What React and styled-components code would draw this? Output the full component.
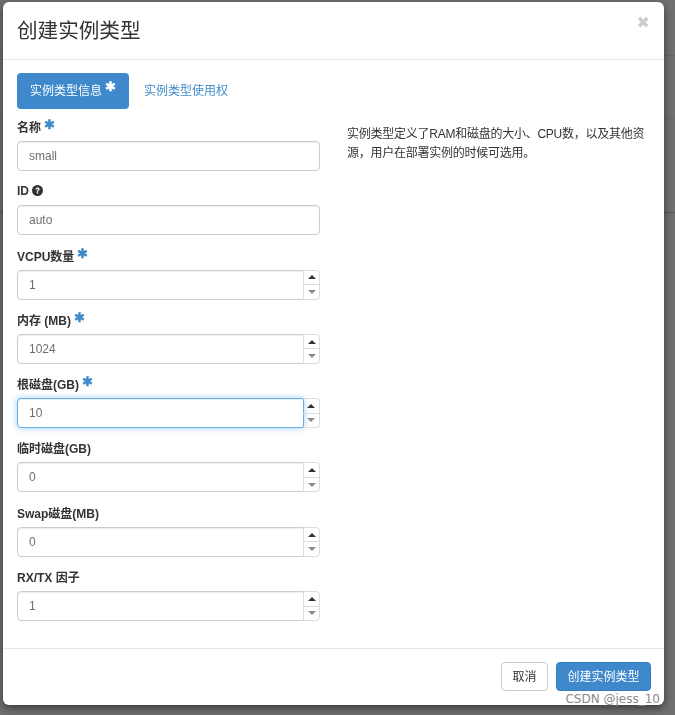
import React from "react";
import styled, { createGlobalStyle } from "styled-components";

const GlobalStyle = createGlobalStyle`
  html, body {
    margin: 0;
    padding: 0;
    height: 715px;
    overflow: hidden;
    background: #6e6e6e;
    font-family: "Liberation Sans", "Noto Sans CJK SC", sans-serif;
    color: #333;
  }
  * { box-sizing: border-box; }
`;

const Backdrop = styled.div`
  position: relative;
  width: 675px;
  height: 715px;
  padding: 2px 0 0 3px;
  background:
    linear-gradient(#565656, #565656) 0 212px / 100% 1px no-repeat,
    linear-gradient(#686868, #686868) 0 118px / 100% 1px no-repeat,
    linear-gradient(#686868, #686868) 0 55px / 100% 1px no-repeat,
    #707070;
`;

const Modal = styled.div`
  width: 661px;
  height: 703px;
  display: flex;
  flex-direction: column;
  background: #fff;
  border-radius: 6px;
  box-shadow: 0 3px 9px rgba(0, 0, 0, 0.5);
  filter: blur(0.3px);
`;

const Header = styled.div`
  height: 58px;
  flex: none;
  display: flex;
  align-items: flex-start;
  justify-content: space-between;
  padding: 14px 14px 0 14px;
  border-bottom: 1px solid #e5e5e5;
`;

const Title = styled.h4`
  margin: 0;
  font-size: 20.6px;
  font-weight: 400;
  line-height: 29px;
  color: #333;
`;

const Close = styled.span`
  font-family: "DejaVu Sans", sans-serif;
  font-size: 16px;
  line-height: 14px;
  color: #ccc;
`;

const Body = styled.div`
  flex: 1;
  padding: 13px 14px 0 14px;
`;

const Tabs = styled.div`
  display: flex;
  align-items: stretch;
  height: 36px;
`;

const Tab = styled.div`
  display: flex;
  align-items: center;
  height: 36px;
  padding: 0 13px 4px;
  border-radius: 4px;
  font-size: 12px;
  color: ${(p) => (p.$active ? "#fff" : "#428bca")};
  background: ${(p) => (p.$active ? "#3f88cb" : "transparent")};
  margin-left: ${(p) => (p.$active ? "0" : "2px")};
`;

const TabStar = styled.span`
  font-size: 13px;
  font-weight: 700;
  margin: -5px 0 0 3px;
`;

const Columns = styled.div`
  display: flex;
  gap: 27px;
`;

const FormColumn = styled.div`
  width: 303px;
  flex: none;
  padding-top: 10px;
`;

const Field = styled.div`
  height: 64.3px;
`;

const Label = styled.div`
  height: 21px;
  display: flex;
  align-items: center;
  gap: 3px;
  padding-bottom: 6px;
  font-size: 12px;
  font-weight: 700;
  color: #333;
`;

const Star = styled.span`
  color: #428bca;
  font-size: 13px;
  margin-top: -4px;
`;

const Control = styled.div`
  display: flex;
  margin-top: 1px;
  height: 30px;
`;

const Input = styled.div`
  flex: 1;
  height: 30px;
  display: flex;
  align-items: center;
  padding-left: 11px;
  font-size: 12px;
  color: #6f6f6f;
  background: #fff;
  border: 1px solid ${(p) => (p.$focus ? "#66afe9" : "#ccc")};
  border-radius: ${(p) => (p.$spin ? "4px 0 0 4px" : "4px")};
  box-shadow: ${(p) =>
    p.$focus
      ? "inset 0 1px 1px rgba(0,0,0,.075), 0 0 6px rgba(102,175,233,.6)"
      : "inset 0 1px 1px rgba(0,0,0,.075)"};
`;

const Spinner = styled.div`
  width: 17px;
  flex: none;
  display: flex;
  flex-direction: column;
  border: 1px solid #ddd;
  border-left: ${(p) => (p.$focus ? "none" : "1px solid #ddd")};
  border-radius: 0 4px 4px 0;
  margin-left: -1px;
`;

const SpinButton = styled.div`
  flex: 1;
  display: flex;
  align-items: center;
  justify-content: center;
  & + & {
    border-top: 1px solid #ddd;
  }
`;

const Arrow = styled.div`
  width: 0;
  height: 0;
  border-left: 4px solid transparent;
  border-right: 4px solid transparent;
  ${(p) =>
    p.$up
      ? "border-bottom: 4px solid #333;"
      : "border-top: 4px solid #888;"}
`;

const Help = styled.p`
  margin: 0;
  padding-top: 16px;
  width: 302px;
  font-size: 12px;
  letter-spacing: -0.25px;
  line-height: 19px;
  color: #333;
`;

const Footer = styled.div`
  height: 57px;
  flex: none;
  display: flex;
  justify-content: flex-end;
  align-items: flex-start;
  gap: 8px;
  padding: 13px 13px 0 0;
  border-top: 1px solid #e5e5e5;
`;

const Button = styled.div`
  height: 29px;
  display: flex;
  align-items: center;
  justify-content: center;
  padding-bottom: 3px;
  width: ${(p) => (p.$primary ? "95px" : "47px")};
  font-size: 12px;
  border-radius: 4px;
  color: ${(p) => (p.$primary ? "#fff" : "#333")};
  background: ${(p) => (p.$primary ? "#3f88cb" : "#fff")};
  border: 1px solid ${(p) => (p.$primary ? "#357ebd" : "#ccc")};
`;

const Watermark = styled.div`
  position: absolute;
  right: 15px;
  bottom: 9px;
  font-family: "DejaVu Sans", sans-serif;
  font-size: 12px;
  line-height: 14px;
  color: #8a8a8a;
`;

const HelpIcon = () => (
  <svg width="11" height="11" viewBox="0 0 24 24">
    <circle cx="12" cy="12" r="12" fill="#333" />
    <path
      d="M7.5 9.5c0-2.6 2-4.2 4.6-4.2 2.5 0 4.5 1.5 4.5 3.8 0 3.1-3.2 3-3.2 5.4h-3c0-3.5 3.1-3.5 3.1-5.2 0-.7-.6-1.2-1.4-1.2-.9 0-1.5.6-1.6 1.6z"
      fill="#fff"
    />
    <rect x="10.4" y="15.6" width="3" height="3" fill="#fff" />
  </svg>
);

const fields = [
  { label: "名称", value: "small", required: true },
  { label: "ID", value: "auto", help: true },
  { label: "VCPU数量", value: "1", required: true, spin: true },
  { label: "内存 (MB)", value: "1024", required: true, spin: true },
  { label: "根磁盘(GB)", value: "10", required: true, spin: true, focus: true },
  { label: "临时磁盘(GB)", value: "0", spin: true },
  { label: "Swap磁盘(MB)", value: "0", spin: true },
  { label: "RX/TX 因子", value: "1", spin: true },
];

const App = () => {
  return (
    <Backdrop>
      <GlobalStyle />
      <Modal>
        <Header>
          <Title>创建实例类型</Title>
          <Close>✖</Close>
        </Header>
        <Body>
          <Tabs>
            <Tab $active>
              实例类型信息<TabStar>✱</TabStar>
            </Tab>
            <Tab>实例类型使用权</Tab>
          </Tabs>
          <Columns>
            <FormColumn>
              {fields.map((f) => (
                <Field key={f.label}>
                  <Label>
                    {f.label}
                    {f.required && <Star>✱</Star>}
                    {f.help && <HelpIcon />}
                  </Label>
                  <Control>
                    <Input $spin={f.spin} $focus={f.focus}>
                      {f.value}
                    </Input>
                    {f.spin && (
                      <Spinner $focus={f.focus}>
                        <SpinButton>
                          <Arrow $up />
                        </SpinButton>
                        <SpinButton>
                          <Arrow />
                        </SpinButton>
                      </Spinner>
                    )}
                  </Control>
                </Field>
              ))}
            </FormColumn>
            <Help>
              实例类型定义了RAM和磁盘的大小、CPU数，以及其他资源，用户在部署实例的时候可选用。
            </Help>
          </Columns>
        </Body>
        <Footer>
          <Button>取消</Button>
          <Button $primary>创建实例类型</Button>
        </Footer>
      </Modal>
      <Watermark>CSDN @jess_10</Watermark>
    </Backdrop>
  );
};

export default App;
